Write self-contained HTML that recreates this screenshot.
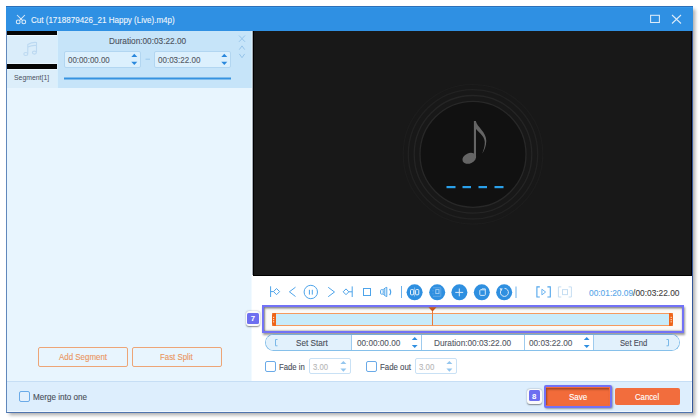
<!DOCTYPE html>
<html><head><meta charset="utf-8">
<style>
*{margin:0;padding:0;box-sizing:border-box}
html,body{width:700px;height:420px;overflow:hidden;background:#fff;font-family:"Liberation Sans",sans-serif}
.a{position:absolute}
.t{position:absolute;white-space:nowrap;font-size:9px;line-height:10px;color:#555;transform-origin:left top;-webkit-text-stroke-width:0.12px}
svg{position:absolute;overflow:visible}
</style></head><body>
<!-- window shadow -->
<div class="a" style="left:6px;top:6px;width:687px;height:407px;box-shadow:2.5px 2.5px 3.5px rgba(0,0,0,0.32)"></div>
<!-- window -->
<div class="a" style="left:6px;top:6px;width:687px;height:407px;background:#fff;border:1px solid #6088bc;border-right-color:#34579a;border-bottom-color:#4f74ae;border-top:none"></div>
<!-- title bar -->
<div class="a" style="left:6px;top:6px;width:687px;height:25px;background:#2f90e3"></div>
<div class="a" style="left:6px;top:6px;width:687px;height:1px;background:#2c6fb8"></div>
<div class="a" style="left:7px;top:7px;width:685px;height:1px;background:#3699ea"></div>
<svg style="left:0;top:0" width="700" height="40">
  <g stroke="#dcebf9" stroke-width="1.05" fill="none">
    <circle cx="18.2" cy="21.9" r="1.9"/>
    <circle cx="23.8" cy="21.9" r="1.9"/>
    <path d="M17 15 L22.4 20.3 M24.9 15 L19.6 20.3"/>
    <rect x="650.6" y="15.3" width="8.8" height="7.2"/>
    <path d="M672 15 L681 23.5 M681 15 L672 23.5"/>
  </g>
</svg>

<!-- left panel -->
<div class="a" style="left:7px;top:31px;width:245px;height:350px;background:#e8f5fe"></div>
<!-- segment row -->
<div class="a" style="left:57px;top:31px;width:194px;height:56.6px;background:#c6e4f9"></div>
<div class="a" style="left:7px;top:31px;width:50px;height:4px;background:#050505"></div>
<div class="a" style="left:7px;top:35px;width:50px;height:28px;background:#daedfa"></div>
<div class="a" style="left:7px;top:63.7px;width:50px;height:5.2px;background:#050505"></div>
<div class="a" style="left:7px;top:68.5px;width:50px;height:19.1px;background:#dceefa"></div>
<div class="a" style="left:7px;top:35px;width:50px;height:1px;background:#eef9ff"></div>
<div class="a" style="left:7px;top:69px;width:50px;height:1px;background:#ecf8ff"></div>
<div class="a" style="left:57px;top:31px;width:1px;height:56.6px;background:#d8effc"></div>
<svg style="left:0;top:0" width="60" height="60">
  <g fill="none" stroke="#bcd9f1" stroke-width="1.1">
    <path d="M27.8 53.5 V44.5 Q32 42 36.5 42.5 V52"/>
    <ellipse cx="25.8" cy="54" rx="2" ry="1.5"/>
    <ellipse cx="34.4" cy="52.6" rx="2" ry="1.5"/>
    <path d="M27.8 47 Q32 45 36.5 45.5"/>
  </g>
</svg>
<!-- inputs -->
<div class="a" style="left:64px;top:51px;width:77px;height:17px;background:#dcf0fd;border:1px solid #b2d6f1;border-radius:2px"></div>
<div class="a" style="left:154px;top:51px;width:77px;height:17px;background:#dcf0fd;border:1px solid #b2d6f1;border-radius:2px"></div>
<svg style="left:0;top:0" width="260" height="90">
  <g fill="#2a88dd">
    <path d="M131.3 56.9 L134.3 53.8 L137.3 56.9 Z"/>
    <path d="M131.3 61.7 L134.3 65 L137.3 61.7 Z"/>
    <path d="M221.3 56.9 L224.3 53.8 L227.3 56.9 Z"/>
    <path d="M221.3 61.7 L224.3 65 L227.3 61.7 Z"/>
  </g>
  <path d="M145.5 59.2 H150" stroke="#9cc8ec" stroke-width="1"/>
  <rect x="64" y="77.5" width="167" height="2" fill="#3592e0"/>
  <g fill="none" stroke="#96c4ea" stroke-width="1">
    <path d="M239 35.5 L245 41.8 M245 35.5 L239 41.8"/>
    <path d="M239.3 49.6 L242 45.9 L244.7 49.6"/>
    <path d="M239.3 53.9 L242 57.7 L244.7 53.9"/>
  </g>
</svg>
<!-- buttons -->
<div class="a" style="left:38px;top:347px;width:90px;height:20px;border:1.3px solid #eda577;border-radius:2px"></div>
<div class="a" style="left:132px;top:347px;width:90px;height:20px;border:1.3px solid #eda577;border-radius:2px"></div>

<!-- video area -->
<div class="a" style="left:251px;top:31px;width:1px;height:350px;background:#f2faff"></div>
<div class="a" style="left:251px;top:31px;width:1px;height:56.6px;background:#d2eefb"></div>
<div class="a" style="left:252px;top:31px;width:1px;height:244px;background:#a0a8b2"></div>
<div class="a" style="left:253px;top:31px;width:439px;height:245px;background:#181818;border:1px solid #000;border-top:none"></div>
<svg style="left:0;top:0" width="700" height="280">
  <circle cx="473" cy="154.3" r="69.8" fill="none" stroke="#1d1d1d" stroke-width="1.2"/>
  <circle cx="473" cy="154.3" r="64.7" fill="none" stroke="#222" stroke-width="1.3"/>
  <circle cx="473" cy="154.3" r="58.8" fill="none" stroke="#252525" stroke-width="1.3"/>
  <circle cx="473" cy="154.3" r="53" fill="#111111" stroke="#282828" stroke-width="1.3"/>
  <g fill="#656565">
    <ellipse cx="469.3" cy="158.3" rx="7.2" ry="5.1" transform="rotate(-24 469.3 158.3)"/>
    <rect x="473.9" y="121" width="2.1" height="37"/>
    <path d="M475.8 121 C477 127 486.5 132 486.3 141 C486.2 146 484.5 150 482.3 153.5 C483.6 150 484.9 146 484.8 142 C484.6 135.5 477.5 131.5 475.8 128.5 Z"/>
  </g>
  <g fill="#2aa0ea">
    <rect x="446.5" y="186" width="9" height="2.2"/>
    <rect x="462.5" y="186" width="8.5" height="2.2"/>
    <rect x="478.5" y="186" width="8.5" height="2.2"/>
    <rect x="494.5" y="186" width="9" height="2.2"/>
  </g>
</svg>

<!-- controls -->
<svg style="left:0;top:0" width="700" height="310">
  <g fill="none" stroke="#4ea4ea" stroke-width="1">
    <path d="M270.6 286.3 V297"/>
    <path d="M270.6 291.6 H273.6 L276.5 288.5 L279.6 291.6 L276.5 294.7 L273.6 291.6"/>
    <path d="M295.5 287.2 L289.4 291.8 L295.5 296.5"/>
    <circle cx="310.8" cy="292" r="6.7"/>
    <path d="M309.4 289.8 V294.6 M312.3 289.8 V294.6"/>
    <path d="M328.2 287.3 L334.5 292 L328.2 296.7"/>
    <path d="M352.2 286.4 V297"/>
    <path d="M352.2 291.8 H348.8 L346 288.9 L343.2 291.8 L346 294.7 L348.8 291.8"/>
    <rect x="363.5" y="288.5" width="7" height="7"/>
    <rect x="380.6" y="289.6" width="2.6" height="4.6" rx="1"/>
    <path d="M383.2 289.6 Q385 287.8 386.8 287.3 V296.6 Q385 296 383.2 294.2"/>
    <path d="M384.8 289 V295"/>
    <path d="M389.6 288.8 Q391.8 292 389.6 295.2" stroke-width="1.2"/>
  </g>
  <path d="M401.5 286 V298" stroke="#6cb2ec" stroke-width="1"/>
  <path d="M516 286.5 V298" stroke="#6cb2ec" stroke-width="1"/>
  <g fill="#2e8fe0">
    <circle cx="414.6" cy="292.3" r="8"/>
    <circle cx="437.2" cy="292.3" r="8"/>
    <circle cx="459.4" cy="292.3" r="8"/>
    <circle cx="481.8" cy="292.3" r="8"/>
    <circle cx="504.2" cy="292.3" r="8"/>
  </g>
  <g fill="none" stroke="#e8f2fb" stroke-width="1">
    <rect x="410.5" y="289.6" width="3.2" height="5.2" rx="0.8"/>
    <rect x="415.6" y="289.6" width="3.2" height="5.2" rx="0.8"/>
    <path d="M414.6 287.5 V296.5" stroke-width="0.5"/>
  </g>
  <g fill="none" stroke="#66aae8" stroke-width="0.9">
    <path d="M433 287.8 H440.8 V296.3 H433"/>
    <path d="M433 290 V291.5 M433 293 V294.5" stroke-width="0.7"/>
  </g>
  <rect x="435.8" y="289.6" width="3.2" height="4" fill="none" stroke="#a6d0f4" stroke-width="0.9"/>
  <path d="M459.3 288.5 V296.3 M455.3 292.4 H463.2" stroke="#dcebf9" stroke-width="1"/>
  <g fill="none" stroke="#d0e6f8" stroke-width="1">
    <rect x="479.8" y="289.8" width="5.5" height="5.6" rx="0.8"/>
    <path d="M481.3 289.8 L482 288.9 H485.3 V290.5"/>
  </g>
  <g fill="none" stroke="#dcebf9" stroke-width="1">
    <path d="M501 290.3 A4 4 0 1 0 504.5 288.4"/>
  </g>
  <path d="M499.6 288.3 L502.8 288.6 L501 291.3 Z" fill="#dcebf9"/>
  <g fill="none" stroke="#52a6ec" stroke-width="1.1">
    <path d="M539.8 286.9 H536.9 V297 H539.8 M547.4 286.9 H550.3 V297 H547.4"/>
    <path d="M541.9 289.2 L545.6 292 L541.9 294.9 Z" stroke-width="1" stroke="#6cb4f0"/>
  </g>
  <g fill="none" stroke="#c6def2" stroke-width="1">
    <path d="M561.3 286.9 H558.4 V297 H561.3 M568.6 286.9 H571.4 V297 H568.6"/>
    <rect x="562.5" y="289.6" width="5" height="5"/>
  </g>
</svg>

<!-- timeline -->
<div class="a" style="left:262px;top:304.5px;width:422px;height:28px;border:2.8px solid #7272f6;box-shadow:1px 1.5px 2px rgba(0,0,0,0.4), inset 1px 1.5px 2px rgba(0,0,0,0.45), inset 0 -1px 1.5px rgba(0,0,0,0.2);background:#fbfaf7"></div>
<div class="a" style="left:272px;top:312.8px;width:401px;height:13.2px;background:#c8ebfa;border-top:1.2px solid #f59a5e;border-bottom:1.2px solid #f59a5e"></div>
<div class="a" style="left:271.6px;top:312.8px;width:4px;height:13.2px;background:#ef6418;border-radius:2px 0 0 2px"></div>
<div class="a" style="left:669.2px;top:312.8px;width:4px;height:13.2px;background:#ef6418;border-radius:0 2px 2px 0"></div>
<svg style="left:0;top:0" width="700" height="340"><g fill="#fbd8c0">
<rect x="273" y="316.8" width="1.2" height="1.2"/><rect x="273" y="319" width="1.2" height="1.2"/><rect x="273" y="321.2" width="1.2" height="1.2"/>
<rect x="670.6" y="316.8" width="1.2" height="1.2"/><rect x="670.6" y="319" width="1.2" height="1.2"/><rect x="670.6" y="321.2" width="1.2" height="1.2"/>
</g></svg>
<svg style="left:0;top:0" width="700" height="340">
  <path d="M428.5 307.3 L436.5 307.3 L432.5 311.5 Z" fill="#c4561a"/>
  <rect x="432" y="311" width="1" height="14.5" fill="#ea7a3a"/>
</svg>
<!-- badge 7 -->
<div class="a" style="left:245.8px;top:311.4px;width:14.5px;height:14.6px;background:#fafafa;border-radius:3px;box-shadow:0 0.5px 1.5px rgba(0,0,0,0.45)"></div>
<div class="a" style="left:246.9px;top:312.6px;width:12.2px;height:11.7px;background:#6e6ff0;border-radius:1.5px"></div>
<div class="t" style="left:250.8px;top:313.6px;color:#fff;font-size:7.8px;font-weight:bold;-webkit-text-stroke-width:0">7</div>

<!-- set start row -->
<div class="a" style="left:265px;top:334px;width:415px;height:17px;border:1px solid #86c0ea;border-top-color:#78acd8;border-radius:8.5px;background:#fff"></div>
<div class="a" style="left:266px;top:335px;width:85px;height:15px;background:#e2f1fc;border-radius:7.5px 0 0 7.5px"></div>
<div class="a" style="left:593px;top:335px;width:86px;height:15px;background:#e2f1fc;border-radius:0 7.5px 7.5px 0"></div>
<div class="a" style="left:351px;top:335px;width:1px;height:15px;background:#9ecbee"></div>
<div class="a" style="left:421px;top:335px;width:1px;height:15px;background:#9ecbee"></div>
<div class="a" style="left:523.5px;top:335px;width:1px;height:15px;background:#9ecbee"></div>
<div class="a" style="left:593px;top:335px;width:1px;height:15px;background:#9ecbee"></div>
<svg style="left:0;top:0" width="700" height="360">
  <path d="M277.5 339.5 H275.5 V345.8 H277.5" fill="none" stroke="#7ab8e8" stroke-width="1"/>
  <path d="M666.5 339.5 H668.5 V345.8 H666.5" fill="none" stroke="#7ab8e8" stroke-width="1"/>
  <g fill="#2e8ee0">
    <path d="M411.8 340 L414.7 337 L417.6 340 Z"/>
    <path d="M411.8 345 L414.7 348 L417.6 345 Z"/>
    <path d="M583.8 340 L586.7 337 L589.6 340 Z"/>
    <path d="M583.8 345 L586.7 348 L589.6 345 Z"/>
  </g>
</svg>

<!-- fade row -->
<div class="a" style="left:265px;top:361px;width:11px;height:11px;border:1.2px solid #6aaae8;border-radius:2px;background:#fff"></div>
<div class="a" style="left:308.6px;top:358.2px;width:42px;height:16.2px;border:1px solid #c9e1f5;border-radius:2px;background:#fff"></div>
<div class="a" style="left:366px;top:361px;width:11px;height:11px;border:1.2px solid #6aaae8;border-radius:2px;background:#fff"></div>
<div class="a" style="left:415.4px;top:358px;width:41.3px;height:16.4px;border:1px solid #c9e1f5;border-radius:2px;background:#fff"></div>
<svg style="left:0;top:0" width="700" height="380">
  <g fill="#94c6ee">
    <path d="M340.4 364 L343.4 361 L346.4 364 Z"/>
    <path d="M340.4 368.6 L343.4 371.8 L346.4 368.6 Z"/>
    <path d="M446.4 364 L449.4 361 L452.4 364 Z"/>
    <path d="M446.4 368.6 L449.4 371.8 L452.4 368.6 Z"/>
  </g>
</svg>

<!-- bottom bar -->
<div class="a" style="left:7px;top:381px;width:685px;height:1px;background:#c6def5"></div>
<div class="a" style="left:7px;top:382px;width:685px;height:30px;background:#ddeefd"></div>
<div class="a" style="left:7px;top:411px;width:685px;height:1px;background:#f0f8ff"></div>
<div class="a" style="left:691px;top:382px;width:1px;height:30px;background:#f0f8ff"></div>
<div class="a" style="left:19px;top:391px;width:11px;height:11px;border:1.2px solid #6aaae8;border-radius:2px;background:#e4f0fc"></div>

<!-- save -->
<div class="a" style="left:527px;top:389px;width:15px;height:14.8px;background:#fafafa;border-radius:3px;box-shadow:0 0.5px 1.5px rgba(0,0,0,0.45)"></div>
<div class="a" style="left:528.9px;top:390px;width:11.4px;height:11.4px;background:#6e6ff0;border-radius:1.5px"></div>
<div class="t" style="left:532px;top:391.5px;color:#fff;font-size:7.8px;font-weight:bold;-webkit-text-stroke-width:0">8</div>
<div class="a" style="left:543.5px;top:385px;width:68.7px;height:22.5px;border:2.8px solid #7272f6;border-radius:2px;box-shadow:1px 1px 2px rgba(0,0,0,0.35);background:#f26b3a"></div>
<div class="a" style="left:546.3px;top:387.8px;width:63.1px;height:16.9px;box-shadow:inset 1px 1.5px 2px rgba(0,0,0,0.35)"></div>
<div class="a" style="left:615px;top:388.2px;width:65px;height:16.8px;background:#f26d3d;border-radius:2px"></div>
<!-- texts -->
<div class="t" style="left:31.00px;top:15px;font-size:9px;color:#eef5fc;transform:scaleX(0.892)">Cut (1718879426_21 Happy (Live).m4p)</div>
<div class="t" style="left:109.30px;top:36px;font-size:9px;color:#4d5360;transform:scaleX(0.918)">Duration:00:03:22.00</div>
<div class="t" style="left:67.90px;top:55px;font-size:9px;color:#555a66;transform:scaleX(0.877)">00:00:00.00</div>
<div class="t" style="left:157.50px;top:55px;font-size:9px;color:#555a66;transform:scaleX(0.892)">00:03:22.00</div>
<div class="t" style="left:14.10px;top:73px;font-size:8px;color:#4a4f5a;transform:scaleX(0.859);-webkit-text-stroke-width:0">Segment[1]</div>
<div class="t" style="left:58.60px;top:352px;font-size:9px;color:#e9955e;transform:scaleX(0.880)">Add Segment</div>
<div class="t" style="left:160.30px;top:352px;font-size:9px;color:#e9955e;transform:scaleX(0.874)">Fast Split</div>
<div class="t" style="left:588.60px;top:288px;font-size:9px;color:#444;transform:scaleX(0.927)"><span style="color:#5aa8ea">00:01:20.09</span>/00:03:22.00</div>
<div class="t" style="left:295.70px;top:338px;font-size:9px;color:#4a4f5a;transform:scaleX(0.906)">Set Start</div>
<div class="t" style="left:357.20px;top:338px;font-size:9px;color:#555a66;transform:scaleX(0.910)">00:00:00.00</div>
<div class="t" style="left:434.20px;top:338px;font-size:9px;color:#555a66;transform:scaleX(0.918)">Duration:00:03:22.00</div>
<div class="t" style="left:529.25px;top:338px;font-size:9px;color:#555a66;transform:scaleX(0.911)">00:03:22.00</div>
<div class="t" style="left:619.50px;top:338px;font-size:9px;color:#4a4f5a;transform:scaleX(0.852)">Set End</div>
<div class="t" style="left:279.10px;top:362px;font-size:9px;color:#4a4f5a;transform:scaleX(0.860)">Fade in</div>
<div class="t" style="left:312.60px;top:362px;font-size:9px;color:#b8b8b8;transform:scaleX(0.856)">3.00</div>
<div class="t" style="left:380.00px;top:362px;font-size:9px;color:#4a4f5a;transform:scaleX(0.872)">Fade out</div>
<div class="t" style="left:419.30px;top:362px;font-size:9px;color:#b8b8b8;transform:scaleX(0.872)">3.00</div>
<div class="t" style="left:32.90px;top:392px;font-size:9px;color:#4a4f5a;transform:scaleX(0.900)">Merge into one</div>
<div class="t" style="left:569.30px;top:392px;font-size:9px;color:#fff;transform:scaleX(0.890)">Save</div>
<div class="t" style="left:634.90px;top:392px;font-size:9px;color:#fff;transform:scaleX(0.861)">Cancel</div>
</body></html>
